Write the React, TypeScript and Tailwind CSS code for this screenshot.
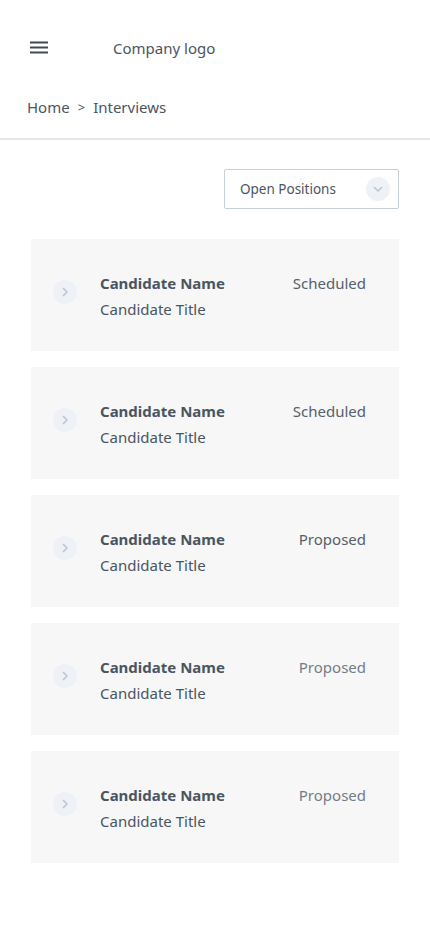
import React from "react";

const items = [
  { status: "Scheduled", light: false },
  { status: "Scheduled", light: false },
  { status: "Proposed", light: false },
  { status: "Proposed", light: true },
  { status: "Proposed", light: true },
];

export default function App() {
  return (
    <div className="min-h-[926px] w-[430px] bg-white text-[#4a5562]" style={{ fontFamily: '"Noto Sans", "Open Sans", sans-serif' }}>
      <header className="flex items-center h-[96px] pl-[30px]">
        <svg width="18" height="14" viewBox="0 0 18 14">
          <rect x="0" y="0.5" width="18" height="2" fill="#3f4a57" />
          <rect x="0" y="5.5" width="18" height="2" fill="#3f4a57" />
          <rect x="0" y="10.5" width="18" height="2" fill="#3f4a57" />
        </svg>
        <span className="ml-[65px] text-[15px] leading-[24px]">Company logo</span>
      </header>
      <div className="-mt-[1px] flex items-center pl-[27px] text-[15px] leading-[24px]">
        <span>Home</span>
        <span className="mx-[8px] text-[13px]">&gt;</span>
        <span>Interviews</span>
      </div>
      <div className="mt-[19px] h-[2px] bg-[#e3e6ea]" />
      <div className="flex justify-end pr-[31px] pt-[29px]">
        <div className="flex items-center justify-between w-[175px] h-[40px] border border-[#c5d0db] rounded-[2px] pl-[15px] pr-[8px]">
          <span className="text-[13.5px]">Open Positions</span>
          <span className="flex items-center justify-center w-[24px] h-[24px] rounded-full bg-[#eef1f5]">
            <svg width="14" height="14" viewBox="0 0 14 14">
              <path d="M3.5 5.5 L7 9 L10.5 5.5" fill="none" stroke="#b9c4d0" strokeWidth="1.5" strokeLinecap="round" strokeLinejoin="round" />
            </svg>
          </span>
        </div>
      </div>
      <div className="flex flex-col gap-[16px] px-[31px] pt-[30px]">
        {items.map((it, i) => (
          <div key={i} className="flex items-start h-[112px] bg-[#f7f7f7] pl-[22px] pr-[33px] pt-[31px]">
            <span className="mt-[10px] flex items-center justify-center w-[24px] h-[24px] rounded-full bg-[#eef2f6] shrink-0">
              <svg width="14" height="14" viewBox="0 0 14 14">
                <path d="M5.5 3.5 L9 7 L5.5 10.5" fill="none" stroke="#b9c4d0" strokeWidth="1.5" strokeLinecap="round" strokeLinejoin="round" />
              </svg>
            </span>
            <div className="ml-[23px] flex-1 flex flex-col text-[15px] leading-[26px]">
              <span className="font-bold">Candidate Name</span>
              <span>Candidate Title</span>
            </div>
            <span className={"text-[15px] leading-[26px] " + (it.light ? "text-[#737d88]" : "text-[#55606c]")}>{it.status}</span>
          </div>
        ))}
      </div>
    </div>
  );
}
